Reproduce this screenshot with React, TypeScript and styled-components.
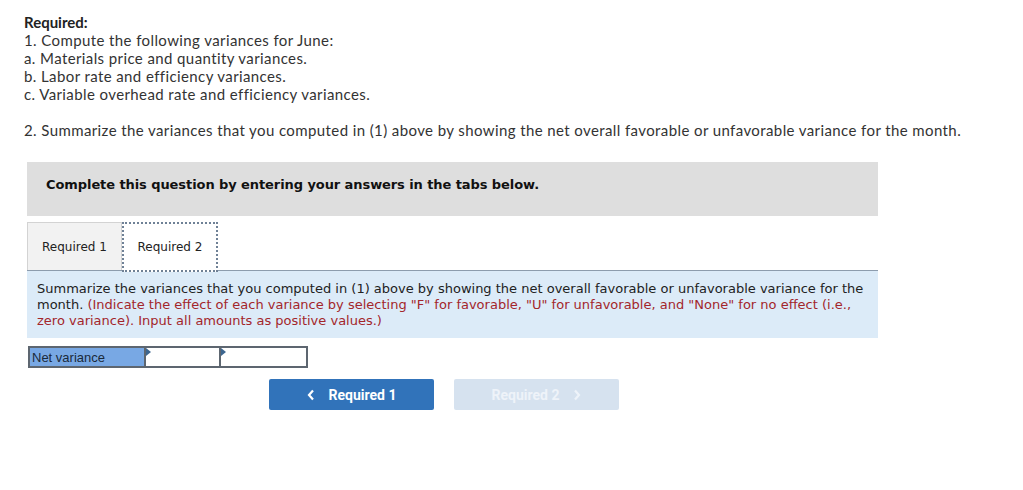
import styled, { createGlobalStyle } from 'styled-components'

const GlobalStyle = createGlobalStyle`
  body {
    margin: 0;
    background: #fff;
    font-family: "Lato", "Liberation Sans", sans-serif;
    color: #333;
  }
`

const Page = styled.div`
  padding: 13px 0 0 24px;
  width: 1000px;
`

const Intro = styled.div`
  font-size: 15px;
  line-height: 18px;
  letter-spacing: 0.4px;
  color: #333;
`

const Strong = styled.div`
  font-weight: 700;
  letter-spacing: 0;
  color: #222;
`

const Spacer = styled.div`
  height: 18px;
`

const Banner = styled.div`
  margin: 23px 0 0 3px;
  width: 851px;
  height: 54px;
  background: #dedede;
  display: flex;
  align-items: center;
  padding: 0 0 10px 19px;
  box-sizing: border-box;
  font-family: "DejaVu Sans", Verdana, sans-serif;
  font-weight: 700;
  font-size: 13px;
  letter-spacing: -0.08px;
  color: #111;
`

const Tabs = styled.div`
  display: flex;
  margin: 6px 0 0 3px;
  height: 48px;
`

const Tab = styled.div<{ $active?: boolean }>`
  box-sizing: border-box;
  display: flex;
  align-items: center;
  justify-content: center;
  font-family: "DejaVu Sans", Verdana, sans-serif;
  font-size: 12px;
  color: #222;
  width: ${p => (p.$active ? '96px' : '95px')};
  background: ${p => (p.$active ? '#fff' : '#f2f2f2')};
  border: ${p => (p.$active ? '2px dotted #6f8196' : '1px solid #d3d3d3')};
  border-bottom: ${p => (p.$active ? '2px dotted #6f8196' : 'none')};
  height: ${p => (p.$active ? '50px' : '48px')};
  position: relative;
  z-index: ${p => (p.$active ? 2 : 1)};
`

const Panel = styled.div`
  margin-left: 3px;
  width: 851px;
  box-sizing: border-box;
  background: #dcebf8;
  border-top: 1px solid #8d9cad;
  padding: 10px 10px 9px 10px;
  font-family: "DejaVu Sans", Verdana, sans-serif;
  font-size: 13px;
  line-height: 16px;
  color: #222;
`

const Note = styled.span`
  color: #a3262b;
`

const Table = styled.div`
  display: flex;
  margin: 8px 0 0 4px;
  width: 280px;
  height: 22px;
  box-sizing: border-box;
  border: 2px solid #5d6670;
`

const Label = styled.div`
  width: 116px;
  background: #78a8e4;
  font-family: "Liberation Sans", Arial, sans-serif;
  font-size: 13px;
  color: #1a2a3a;
  display: flex;
  align-items: center;
  padding-left: 2px;
  box-sizing: border-box;
`

const Cell = styled.div<{ $w: number }>`
  width: ${p => p.$w}px;
  background: #fff;
  border-left: 2px solid #5d6670;
  position: relative;
  &::before {
    content: '';
    position: absolute;
    left: 0;
    top: 0;
    border-top: 4px solid transparent;
    border-bottom: 4px solid transparent;
    border-left: 5px solid #3d6690;
  }
`

const Nav = styled.div`
  display: flex;
  gap: 20px;
  margin: 11px 0 0 245px;
`

const NavButton = styled.div<{ $disabled?: boolean }>`
  width: 165px;
  height: 31px;
  border-radius: 2px;
  display: flex;
  align-items: center;
  justify-content: center;
  gap: 14px;
  font-family: Roboto, "Liberation Sans", sans-serif;
  font-weight: 700;
  font-size: 14px;
  background: ${p => (p.$disabled ? '#d6e2ef' : '#3173ba')};
  color: ${p => (p.$disabled ? '#eef3f9' : '#fff')};
`

const Chevron = ({ dir }: { dir: 'left' | 'right' }) => (
  <svg width="8" height="12" viewBox="0 0 8 12">
    <path
      d={dir === 'left' ? 'M6 1.5 L2 6 L6 10.5' : 'M2 1.5 L6 6 L2 10.5'}
      fill="none"
      stroke="currentColor"
      strokeWidth="2.2"
    />
  </svg>
)

function App() {
  return (
    <>
      <GlobalStyle />
      <Page>
        <Intro>
          <Strong>Required:</Strong>
          <div>1. Compute the following variances for June:</div>
          <div>a. Materials price and quantity variances.</div>
          <div>b. Labor rate and efficiency variances.</div>
          <div>c. Variable overhead rate and efficiency variances.</div>
          <Spacer />
          <div>2. Summarize the variances that you computed in (1) above by showing the net overall favorable or unfavorable variance for the month.</div>
        </Intro>
        <Banner>Complete this question by entering your answers in the tabs below.</Banner>
        <Tabs>
          <Tab>Required 1</Tab>
          <Tab $active>Required 2</Tab>
        </Tabs>
        <Panel>
          Summarize the variances that you computed in (1) above by showing the net overall favorable or unfavorable variance for the month.{' '}
          <Note>
            (Indicate the effect of each variance by selecting "F" for favorable, "U" for unfavorable, and "None" for no effect (i.e.,
            zero variance). Input all amounts as positive values.)
          </Note>
        </Panel>
        <Table>
          <Label>Net variance</Label>
          <Cell $w={74} />
          <Cell $w={86} />
        </Table>
        <Nav>
          <NavButton>
            <Chevron dir="left" />
            Required 1
          </NavButton>
          <NavButton $disabled>
            Required 2
            <Chevron dir="right" />
          </NavButton>
        </Nav>
      </Page>
    </>
  )
}

export default App
